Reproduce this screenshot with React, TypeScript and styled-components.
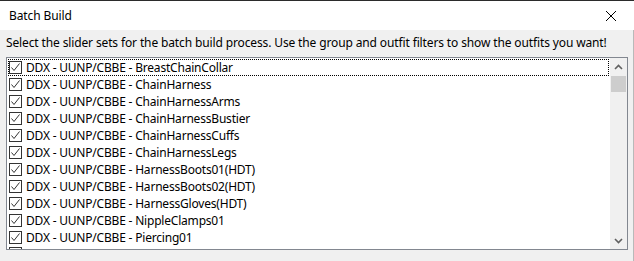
import React from "react";
import styled, { createGlobalStyle } from "styled-components";

const GlobalStyle = createGlobalStyle`
    html, body {
        margin: 0;
        padding: 0;
        background: #f0f0f0;
    }
    body {
        font-family: "Noto Sans", "Liberation Sans", sans-serif;
        font-size: 12px;
        color: #000;
    }
`

const items = [
    "BreastChainCollar",
    "ChainHarness",
    "ChainHarnessArms",
    "ChainHarnessBustier",
    "ChainHarnessCuffs",
    "ChainHarnessLegs",
    "HarnessBoots01(HDT)",
    "HarnessBoots02(HDT)",
    "HarnessGloves(HDT)",
    "NippleClamps01",
    "Piercing01",
]

const Window = styled.div({
    width: 634,
    height: 261,
    display: 'flex',
    flexDirection: 'column',
    boxSizing: 'border-box',
    borderTop: '1px solid #2b2b2b',
    background: '#f0f0f0',
    overflow: 'hidden',
})

const TitleBar = styled.div({
    height: 29,
    flexShrink: 0,
    display: 'flex',
    alignItems: 'center',
    justifyContent: 'space-between',
    background: '#fff',
    paddingLeft: 9,
})

const Title = styled.span({
    fontSize: 12,
    letterSpacing: '-0.1px',
})

const CloseButton = styled.div({
    width: 46,
    height: 29,
    display: 'flex',
    alignItems: 'center',
    justifyContent: 'center',
})

const Body = styled.div({
    flex: 1,
    display: 'flex',
    flexDirection: 'column',
    padding: '5px 5px 0 6px',
    borderLeft: '1px solid #b9b9b9',
    borderRight: '1px solid #b9b9b9',
    marginLeft: -1,
})

const Prompt = styled.div({
    height: 16,
    lineHeight: '16px',
    whiteSpace: 'nowrap',
    letterSpacing: '-0.13px',
    marginBottom: 6,
})

const ListBox = styled.div({
    height: 193,
    boxSizing: 'border-box',
    border: '1px solid #828790',
    background: '#fff',
    display: 'flex',
})

const Items = styled.div({
    flex: 1,
    padding: '1px 1px 0 1px',
    overflow: 'hidden',
})

const Row = styled.div<{ $focused?: boolean }>`
    height: 17px;
    box-sizing: border-box;
    display: flex;
    align-items: center;
    padding-left: 1px;
    outline: ${p => p.$focused ? '1px dotted #000' : 'none'};
    outline-offset: -1px;
`

const Check = styled.span({
    width: 13,
    height: 13,
    boxSizing: 'border-box',
    border: '1px solid #333',
    background: '#fff',
    display: 'flex',
    alignItems: 'center',
    justifyContent: 'center',
    flexShrink: 0,
    marginRight: 4,
})

// row cut off by the list's bottom edge: only the top of its box shows
const PartialRow = styled.div({
    height: 2,
    paddingLeft: 1,
    paddingTop: 1,
    overflow: 'hidden',
})

const Label = styled.span({
    whiteSpace: 'nowrap',
    letterSpacing: '-0.2px',
})

const ScrollBar = styled.div({
    width: 17,
    display: 'flex',
    flexDirection: 'column',
    background: '#f0f0f0',
})

const ArrowButton = styled.div({
    height: 17,
    display: 'flex',
    alignItems: 'center',
    justifyContent: 'center',
})

const Track = styled.div({
    flex: 1,
    paddingTop: 1,
})

const Thumb = styled.div({
    height: 16,
    margin: '0 1px',
    background: '#cdcdcd',
})

const Tick = () => (
    <svg width="11" height="11" viewBox="0 0 11 11">
        <path d="M1.5 5.5 L4 8.5 L9.5 1.5" fill="none" stroke="#333" strokeWidth="1" />
    </svg>
)

const Chevron = ({ up }: { up?: boolean }) => (
    <svg width="9" height="6" viewBox="0 0 9 6">
        <path d={up ? "M1 5 L4.5 1.5 L8 5" : "M1 1 L4.5 4.5 L8 1"} fill="none" stroke="#606060" strokeWidth="1.6" />
    </svg>
)

export default () => {
    return <>
        <GlobalStyle />
        <Window>
            <TitleBar>
                <Title>Batch Build</Title>
                <CloseButton>
                    <svg width="10" height="10" viewBox="0 0 10 10">
                        <path d="M0 0 L10 10 M10 0 L0 10" stroke="#000" strokeWidth="1" />
                    </svg>
                </CloseButton>
            </TitleBar>
            <Body>
                <Prompt>Select the slider sets for the batch build process. Use the group and outfit filters to show the outfits you want!</Prompt>
                <ListBox>
                    <Items>
                        {items.map((name, i) =>
                            <Row key={name} $focused={i === 0}>
                                <Check><Tick /></Check>
                                <Label>DDX - UUNP/CBBE - {name}</Label>
                            </Row>
                        )}
                        <PartialRow><Check /></PartialRow>
                    </Items>
                    <ScrollBar>
                        <ArrowButton><Chevron up /></ArrowButton>
                        <Track><Thumb /></Track>
                        <ArrowButton><Chevron /></ArrowButton>
                    </ScrollBar>
                </ListBox>
            </Body>
        </Window>
    </>
}
